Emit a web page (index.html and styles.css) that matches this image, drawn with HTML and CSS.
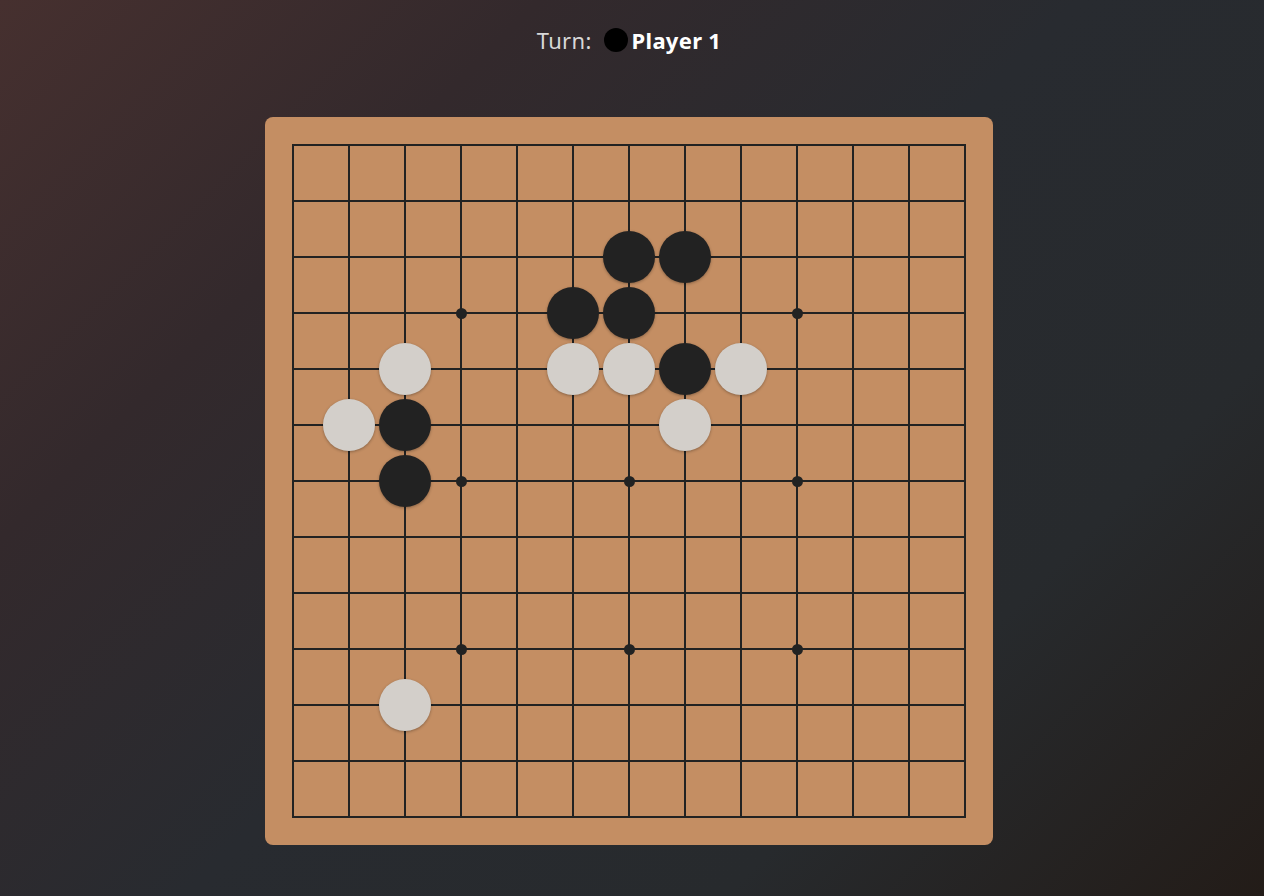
FILE: index.html
```html
<!DOCTYPE html>
<html lang="en">
<head>
<meta charset="utf-8">
<title>Gomoku</title>
<link rel="stylesheet" href="styles.css">
</head>
<body>
<main class="app">
  <div class="turn">
    <span class="turn-label">Turn:</span>
    <span class="turn-stone"></span>
    <span class="turn-player">Player 1</span>
  </div>
  <div class="board">
    <div class="lines"></div>
    <span class="star" style="grid-area: 4 / 4"></span>
    <span class="star" style="grid-area: 4 / 10"></span>
    <span class="star" style="grid-area: 7 / 4"></span>
    <span class="star" style="grid-area: 7 / 7"></span>
    <span class="star" style="grid-area: 7 / 10"></span>
    <span class="star" style="grid-area: 10 / 4"></span>
    <span class="star" style="grid-area: 10 / 7"></span>
    <span class="star" style="grid-area: 10 / 10"></span>

    <span class="stone black" style="grid-area: 3 / 7"></span>
    <span class="stone black" style="grid-area: 3 / 8"></span>
    <span class="stone black" style="grid-area: 4 / 6"></span>
    <span class="stone black" style="grid-area: 4 / 7"></span>
    <span class="stone black" style="grid-area: 5 / 8"></span>
    <span class="stone black" style="grid-area: 6 / 3"></span>
    <span class="stone black" style="grid-area: 7 / 3"></span>

    <span class="stone white" style="grid-area: 5 / 3"></span>
    <span class="stone white" style="grid-area: 5 / 6"></span>
    <span class="stone white" style="grid-area: 5 / 7"></span>
    <span class="stone white" style="grid-area: 5 / 9"></span>
    <span class="stone white" style="grid-area: 6 / 2"></span>
    <span class="stone white" style="grid-area: 6 / 8"></span>
    <span class="stone white" style="grid-area: 11 / 3"></span>
  </div>
</main>
</body>
</html>
```

FILE: styles.css
```css
html, body {
  margin: 0;
  padding: 0;
}

body {
  min-height: 100vh;
  background: linear-gradient(135deg, #46302f 0%, #33292c 25%, #282b30 50%, #272a2d 75%, #231c18 100%);
  font-family: "Noto Sans", "Open Sans", "DejaVu Sans", sans-serif;
  color: #fff;
}

.app {
  display: flex;
  flex-direction: column;
  align-items: center;
  padding-top: 20px;
  padding-right: 6px;
}

.turn {
  display: flex;
  align-items: center;
  height: 40px;
  font-size: 22px;
  letter-spacing: 0.3px;
}

.turn-label {
  color: #d8d8d8;
  margin-right: 12px;
}

.turn-stone {
  width: 24px;
  height: 24px;
  border-radius: 50%;
  background: #000;
  margin-right: 4px;
}

.turn-player {
  font-weight: 700;
  color: #fff;
}

.board {
  position: relative;
  margin-top: 57px;
  display: grid;
  grid-template-columns: repeat(13, 56px);
  grid-template-rows: repeat(13, 56px);
  background: #c48e63;
  border-radius: 8px;
}

.lines {
  position: absolute;
  inset: 27px;
  background-image:
    repeating-linear-gradient(to right, #222 0 2px, transparent 2px 56px),
    repeating-linear-gradient(to bottom, #222 0 2px, transparent 2px 56px);
}

.star {
  place-self: center;
  width: 11px;
  height: 11px;
  border-radius: 50%;
  background: #222;
  z-index: 1;
}

.stone {
  place-self: center;
  width: 52px;
  height: 52px;
  border-radius: 50%;
  z-index: 2;
  box-shadow: 0 1px 3px rgba(0, 0, 0, 0.3);
}

.stone.black {
  background: #222;
}

.stone.white {
  background: #d3cfca;
}
```
